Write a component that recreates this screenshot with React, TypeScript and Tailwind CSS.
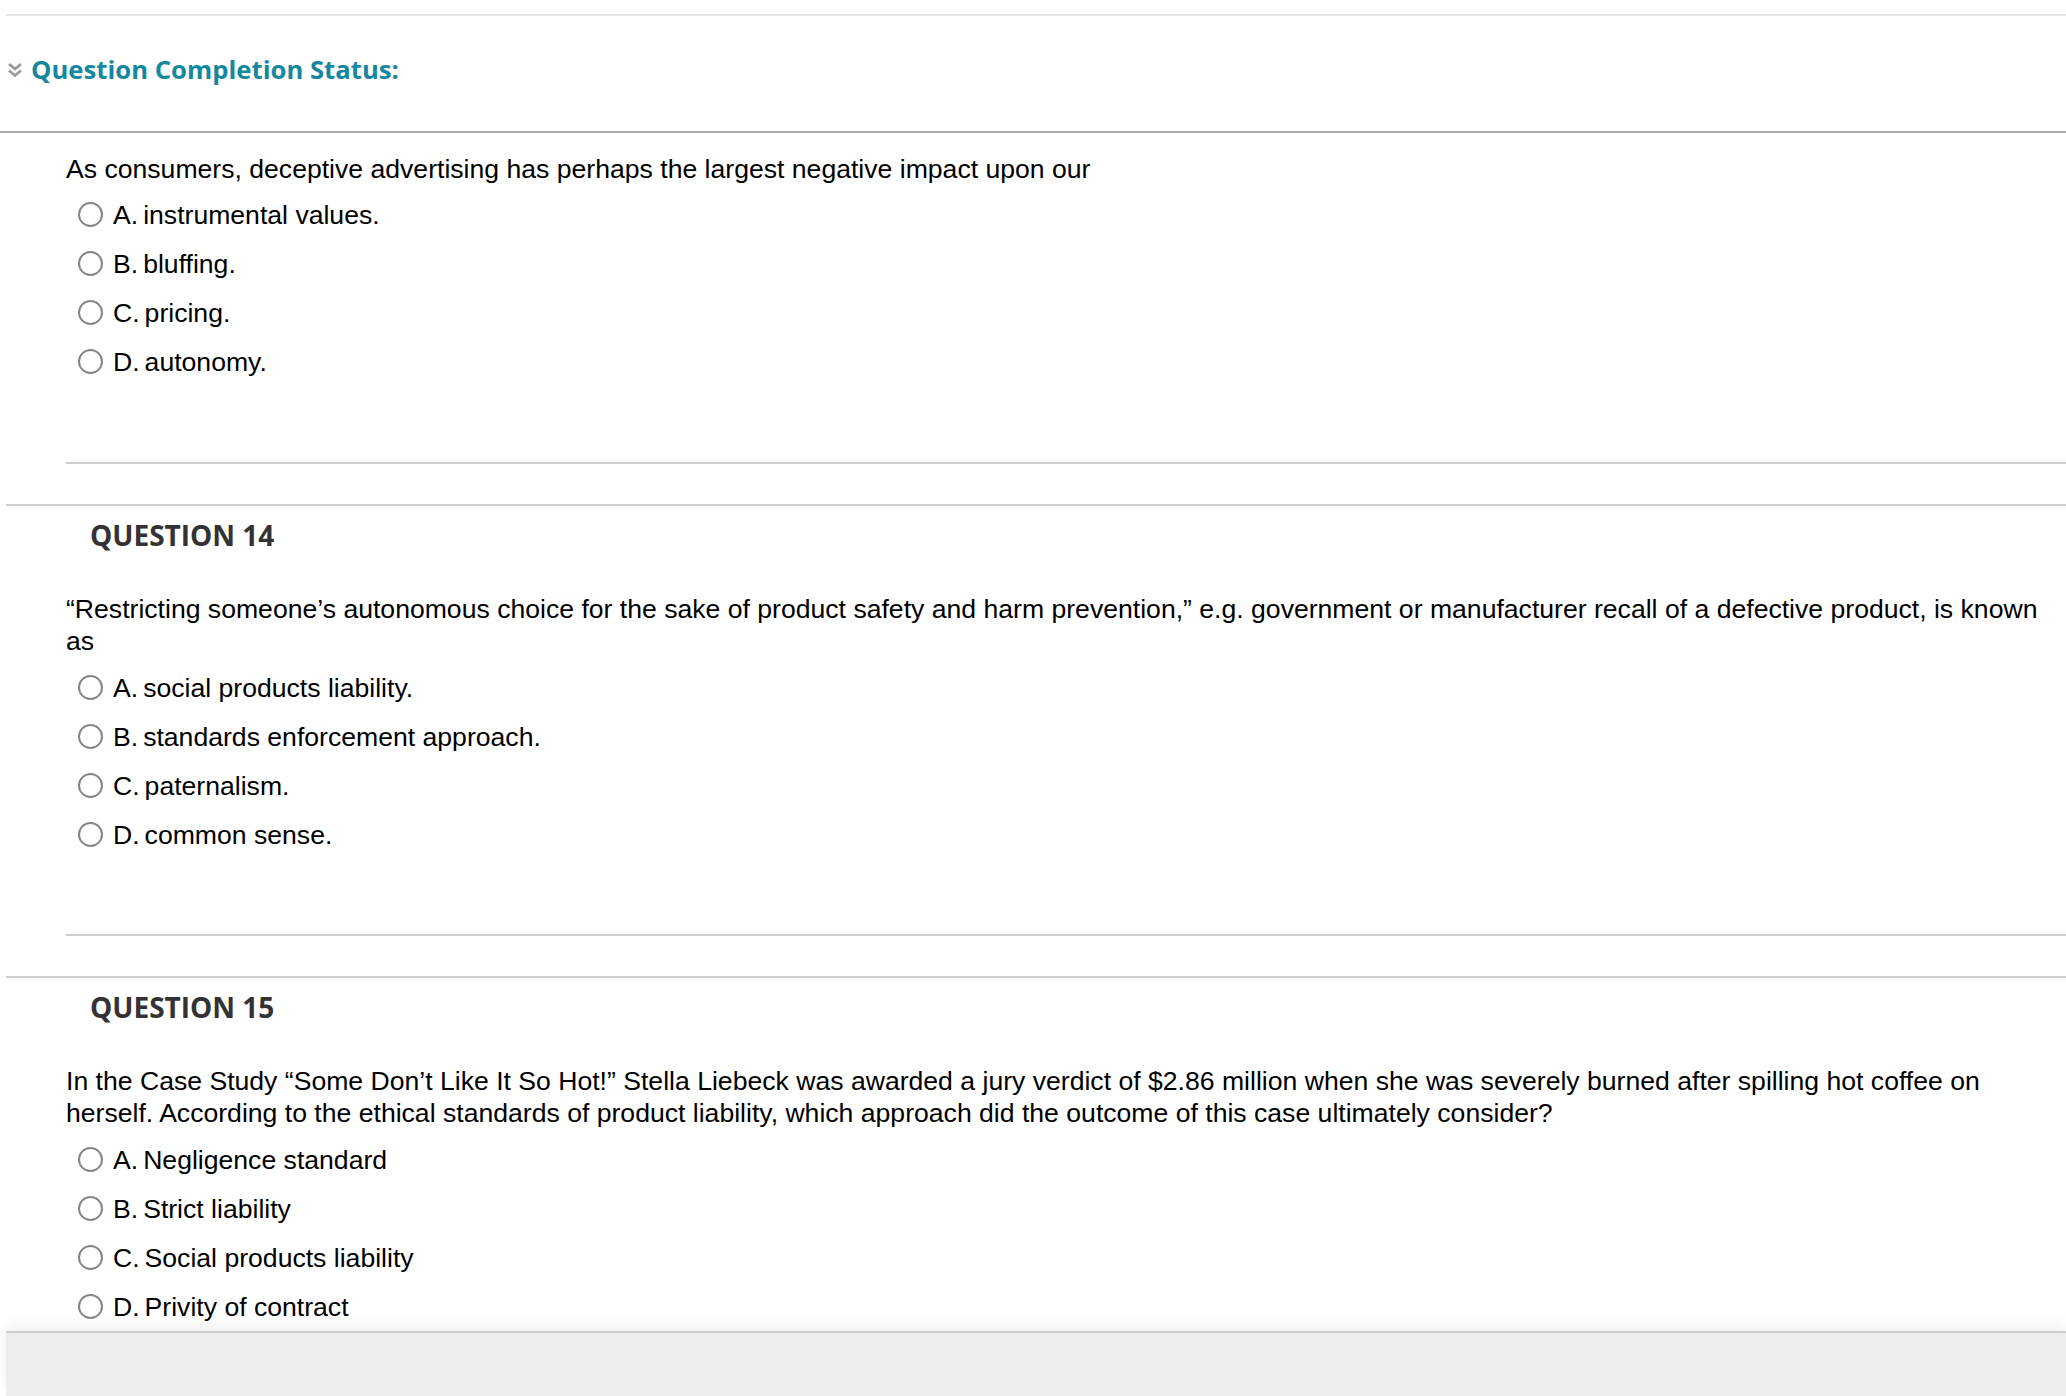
import React from "react";

type Q = { letter: string; text: string };

const Radio = () => (
  <span className="inline-block w-[25px] h-[25px] rounded-full border-2 border-[#858585] bg-white shrink-0" />
);

function Option({ letter, text }: Q) {
  return (
    <div className="flex items-center h-[49px]">
      <span className="ml-[12px] flex">
        <Radio />
      </span>
      <span className="ml-[10px]">{letter}</span>
      <span className="ml-[5px]">{text}</span>
    </div>
  );
}

function Options({ items }: { items: Q[] }) {
  return (
    <div className="flex flex-col">
      {items.map((o) => (
        <Option key={o.letter} letter={o.letter} text={o.text} />
      ))}
    </div>
  );
}

function QuestionHeader({ n }: { n: number }) {
  return (
    <>
      <div className="mt-[40px] ml-[6px] h-[2px] bg-[#cccccc]" />
      <div className="pl-[90px] pt-[11px]">
        <h3 className="font-['Open_Sans',sans-serif] font-bold text-[28px] leading-[36px] text-[#333333]">
          QUESTION {n}
        </h3>
      </div>
    </>
  );
}

export default function App() {
  return (
    <div className="relative w-full h-[1396px] overflow-hidden bg-white text-black font-['Liberation_Sans',Arial,sans-serif] text-[26.6px] leading-[32px]">
      <div className="pt-[14px]">
        <div className="ml-[6px] h-[2px] bg-[#e6e6e6]" />
      </div>
      <div className="h-[115px] pb-[8px] flex items-center pl-[6px]">
        <svg width="18" height="18" viewBox="0 0 18 18" className="shrink-0">
          <polyline points="3,3 9,8 15,3" fill="none" stroke="#9a9a9a" strokeWidth="2.8" />
          <polyline points="3,9.5 9,14.5 15,9.5" fill="none" stroke="#9a9a9a" strokeWidth="2.8" />
        </svg>
        <span className="ml-[7px] font-['Open_Sans',sans-serif] font-bold text-[25.7px] leading-[32px] text-[#15879f]">
          Question Completion Status:
        </span>
      </div>
      <div className="h-[2px] bg-[#a8a8a8]" />

      <div className="pl-[66px]">
        <p className="pt-[20px]">
          As consumers, deceptive advertising has perhaps the largest negative impact upon our
        </p>
        <div className="mt-[5px]">
          <Options
            items={[
              { letter: "A.", text: "instrumental values." },
              { letter: "B.", text: "bluffing." },
              { letter: "C.", text: "pricing." },
              { letter: "D.", text: "autonomy." },
            ]}
          />
        </div>
        <div className="mt-[76px] h-[2px] bg-[#cccccc]" />
      </div>

      <QuestionHeader n={14} />
      <div className="pl-[66px]">
        <p className="mt-[40px]">
          “Restricting someone’s autonomous choice for the sake of product safety and harm prevention,” e.g. government or manufacturer recall of a defective product, is known as
        </p>
        <div className="mt-[6px]">
          <Options
            items={[
              { letter: "A.", text: "social products liability." },
              { letter: "B.", text: "standards enforcement approach." },
              { letter: "C.", text: "paternalism." },
              { letter: "D.", text: "common sense." },
            ]}
          />
        </div>
        <div className="mt-[75px] h-[2px] bg-[#cccccc]" />
      </div>

      <QuestionHeader n={15} />
      <div className="pl-[66px]">
        <p className="mt-[40px]">
          In the Case Study “Some Don’t Like It So Hot!” Stella Liebeck was awarded a jury verdict of $2.86 million when she was severely burned after spilling hot coffee on herself. According to the ethical standards of product liability, which approach did the outcome of this case ultimately consider?
        </p>
        <div className="mt-[6px]">
          <Options
            items={[
              { letter: "A.", text: "Negligence standard" },
              { letter: "B.", text: "Strict liability" },
              { letter: "C.", text: "Social products liability" },
              { letter: "D.", text: "Privity of contract" },
            ]}
          />
        </div>
      </div>

      <div className="absolute bottom-0 left-[6px] right-0 h-[65px] bg-[#ededed] border-t-2 border-[#cccccc] shadow-[0_-6px_12px_rgba(0,0,0,0.06)]" />
    </div>
  );
}
